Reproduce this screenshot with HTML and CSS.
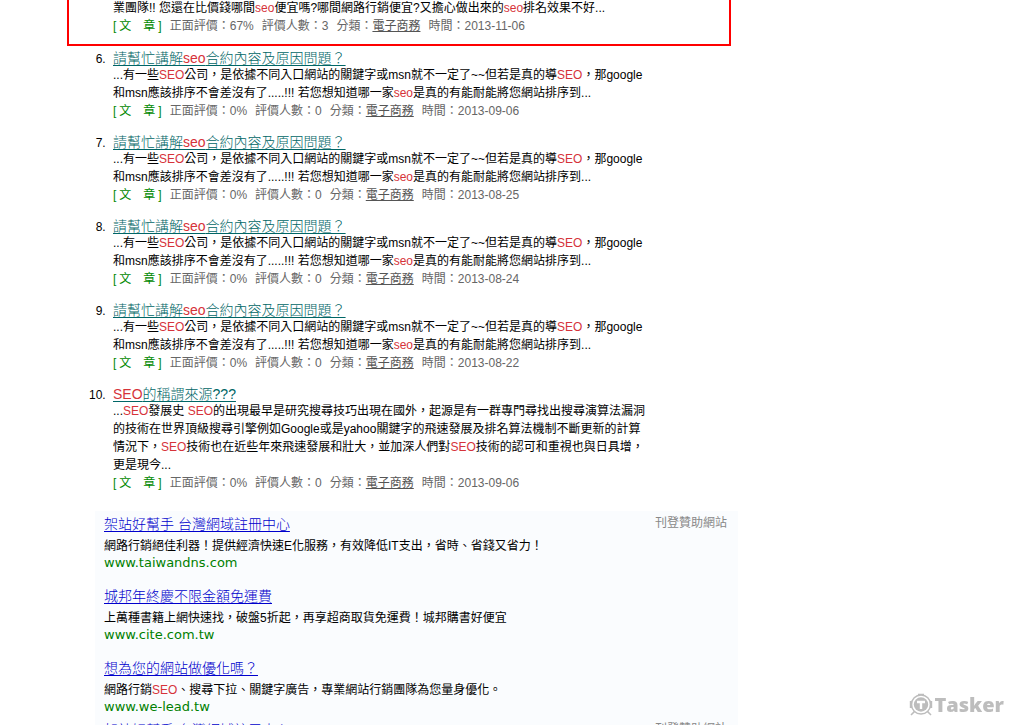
FILE: index.html
```html
<!DOCTYPE html>
<html lang="zh-Hant">
<head>
<meta charset="utf-8">
<title>SEO</title>
<link rel="stylesheet" href="styles.css">
</head>
<body>
<main class="page">
  <section class="highlight">
    <p class="excerpt">業團隊!! 您還在比價錢哪間<em>seo</em>便宜嗎?哪間網路行銷便宜?又擔心做出來的<em>seo</em>排名效果不好...</p>
    <p class="meta"><span class="kind">[<b>文　章</b>]</span><span>正面評價：67%</span><span>評價人數：3</span><span>分類：<a href="#">電子商務</a></span><span>時間：2013-11-06</span></p>
  </section>

  <ol class="results" start="6">
    <li class="result">
      <a class="title" href="#">請幫忙講解<em>seo</em>合約內容及原因問題？</a>
      <p class="excerpt">...有一些<em>SEO</em>公司，是依據不同入口網站的關鍵字或msn就不一定了~~但若是真的導<em>SEO</em>，那google<br>和msn應該排序不會差沒有了.....!!! 若您想知道哪一家<em>seo</em>是真的有能耐能將您網站排序到...</p>
      <p class="meta"><span class="kind">[<b>文　章</b>]</span><span>正面評價：0%</span><span>評價人數：0</span><span>分類：<a href="#">電子商務</a></span><span>時間：2013-09-06</span></p>
    </li>
    <li class="result">
      <a class="title" href="#">請幫忙講解<em>seo</em>合約內容及原因問題？</a>
      <p class="excerpt">...有一些<em>SEO</em>公司，是依據不同入口網站的關鍵字或msn就不一定了~~但若是真的導<em>SEO</em>，那google<br>和msn應該排序不會差沒有了.....!!! 若您想知道哪一家<em>seo</em>是真的有能耐能將您網站排序到...</p>
      <p class="meta"><span class="kind">[<b>文　章</b>]</span><span>正面評價：0%</span><span>評價人數：0</span><span>分類：<a href="#">電子商務</a></span><span>時間：2013-08-25</span></p>
    </li>
    <li class="result">
      <a class="title" href="#">請幫忙講解<em>seo</em>合約內容及原因問題？</a>
      <p class="excerpt">...有一些<em>SEO</em>公司，是依據不同入口網站的關鍵字或msn就不一定了~~但若是真的導<em>SEO</em>，那google<br>和msn應該排序不會差沒有了.....!!! 若您想知道哪一家<em>seo</em>是真的有能耐能將您網站排序到...</p>
      <p class="meta"><span class="kind">[<b>文　章</b>]</span><span>正面評價：0%</span><span>評價人數：0</span><span>分類：<a href="#">電子商務</a></span><span>時間：2013-08-24</span></p>
    </li>
    <li class="result">
      <a class="title" href="#">請幫忙講解<em>seo</em>合約內容及原因問題？</a>
      <p class="excerpt">...有一些<em>SEO</em>公司，是依據不同入口網站的關鍵字或msn就不一定了~~但若是真的導<em>SEO</em>，那google<br>和msn應該排序不會差沒有了.....!!! 若您想知道哪一家<em>seo</em>是真的有能耐能將您網站排序到...</p>
      <p class="meta"><span class="kind">[<b>文　章</b>]</span><span>正面評價：0%</span><span>評價人數：0</span><span>分類：<a href="#">電子商務</a></span><span>時間：2013-08-22</span></p>
    </li>
    <li class="result">
      <a class="title" href="#"><em>SEO</em>的稱謂來源???</a>
      <p class="excerpt">...<em>SEO</em>發展史 <em>SEO</em>的出現最早是研究搜尋技巧出現在國外，起源是有一群專門尋找出搜尋演算法漏洞<br>的技術在世界頂級搜尋引擎例如Google或是yahoo關鍵字的飛速發展及排名算法機制不斷更新的計算<br>情況下，<em>SEO</em>技術也在近些年來飛速發展和壯大，並加深人們對<em>SEO</em>技術的認可和重視也與日具增，<br>更是現今...</p>
      <p class="meta"><span class="kind">[<b>文　章</b>]</span><span>正面評價：0%</span><span>評價人數：0</span><span>分類：<a href="#">電子商務</a></span><span>時間：2013-09-06</span></p>
    </li>
  </ol>

  <aside class="sponsors">
    <section class="sponsor-group">
      <div class="ads">
        <article class="ad">
          <a class="ad-title" href="#">架站好幫手 台灣網域註冊中心</a>
          <p class="ad-text">網路行銷絕佳利器！提供經濟快速E化服務，有效降低IT支出，省時、省錢又省力！</p>
          <p class="ad-url">www.taiwandns.com</p>
        </article>
        <article class="ad">
          <a class="ad-title" href="#">城邦年終慶不限金額免運費</a>
          <p class="ad-text">上萬種書籍上網快速找，破盤5折起，再享超商取貨免運費！城邦購書好便宜</p>
          <p class="ad-url">www.cite.com.tw</p>
        </article>
        <article class="ad">
          <a class="ad-title" href="#">想為您的網站做優化嗎？</a>
          <p class="ad-text">網路行銷<em>SEO</em>、搜尋下拉、關鍵字廣告，專業網站行銷團隊為您量身優化。</p>
          <p class="ad-url">www.we-lead.tw</p>
        </article>
      </div>
      <p class="ad-note">刊登贊助網站</p>
    </section>
    <section class="sponsor-group">
      <div class="ads">
        <article class="ad">
          <a class="ad-title" href="#">架站好幫手 台灣網域註冊中心</a>
        </article>
      </div>
      <p class="ad-note">刊登贊助網站</p>
    </section>
  </aside>
</main>

<div class="watermark">
  <svg class="mark" viewBox="0 0 24 24" aria-hidden="true">
    <circle cx="12" cy="11.500" r="7.200" fill="#bdbdbd"/>
    <g fill="none" stroke="#bdbdbd">
      <circle cx="12" cy="11.500" r="9.600" stroke-width="1.500"/>
      <path d="M2 8v7M22 8v7" stroke-width="2.400"/>
      <path d="M9 1.500h6M5.500 18.500l-3.500 3.500M18.500 18.500l3.500 3.500" stroke-width="1.600"/>
    </g>
    <path d="M8 9h8M12 9v7" fill="none" stroke="#fff" stroke-width="2.400"/>
  </svg>
  <span>Tasker</span>
</div>
</body>
</html>
```
FILE: styles.css
```css
html {
  height: 100%;
  overflow: hidden;
}

body {
  margin: 0;
  height: 100%;
  background: #fff;
  color: #000;
  font-family: "Liberation Sans", "Noto Sans CJK TC", sans-serif;
  font-size: 12px;
  line-height: 18px;
}

p {
  margin: 0;
}

em {
  color: #d6333a;
  font-style: normal;
}

.page {
  max-width: 671px;
  margin-top: -1px;
  margin-left: 67px;
}

.highlight {
  margin-right: 7px;
  padding: 0 0 9px 44px;
  border: 2px solid #f00;
  border-top: 0;
}

.results {
  margin: 4px 0 19px;
  padding: 0 0 0 42px;
}

.result {
  margin-bottom: 14px;
  padding-left: 4px;
}

.result:last-child {
  margin-bottom: 0;
}

.excerpt {
  white-space: nowrap;
}

.title,
.ad-title {
  display: block;
  width: max-content;
  font-size: 14px;
  font-weight: 300;
  text-decoration-skip-ink: none;
  text-underline-offset: 2px;
}

.title {
  color: #066;
  line-height: 16px;
}

.meta {
  display: flex;
  gap: 8px;
  color: #666;
  white-space: nowrap;
}

.meta a {
  color: #555;
}

.kind {
  color: #080;
}

.kind b {
  padding: 0 3px;
  font-weight: 400;
}

.sponsors {
  display: grid;
  gap: 2px;
  margin-left: 28px;
  background: #fafcfe;
}

.sponsor-group {
  display: flex;
  justify-content: space-between;
  padding: 3px 11px 0 9px;
}

.ad {
  margin-bottom: 15px;
}

.ad:last-child {
  margin-bottom: 0;
}

.ad-title {
  margin-bottom: 3px;
  color: #00c;
  line-height: 20px;
}

.ad-url {
  color: #008000;
  font-family: "DejaVu Sans", sans-serif;
  font-size: 13px;
  line-height: 16px;
}

.ad-note {
  color: #888;
}

.watermark {
  position: fixed;
  right: 16px;
  bottom: 8px;
  display: flex;
  align-items: center;
  gap: 1px;
  color: #bdbdbd;
  font-family: "Open Sans", sans-serif;
  font-size: 20px;
  font-weight: 800;
  line-height: 24px;
}

.mark {
  width: 24px;
  height: 24px;
}
```
